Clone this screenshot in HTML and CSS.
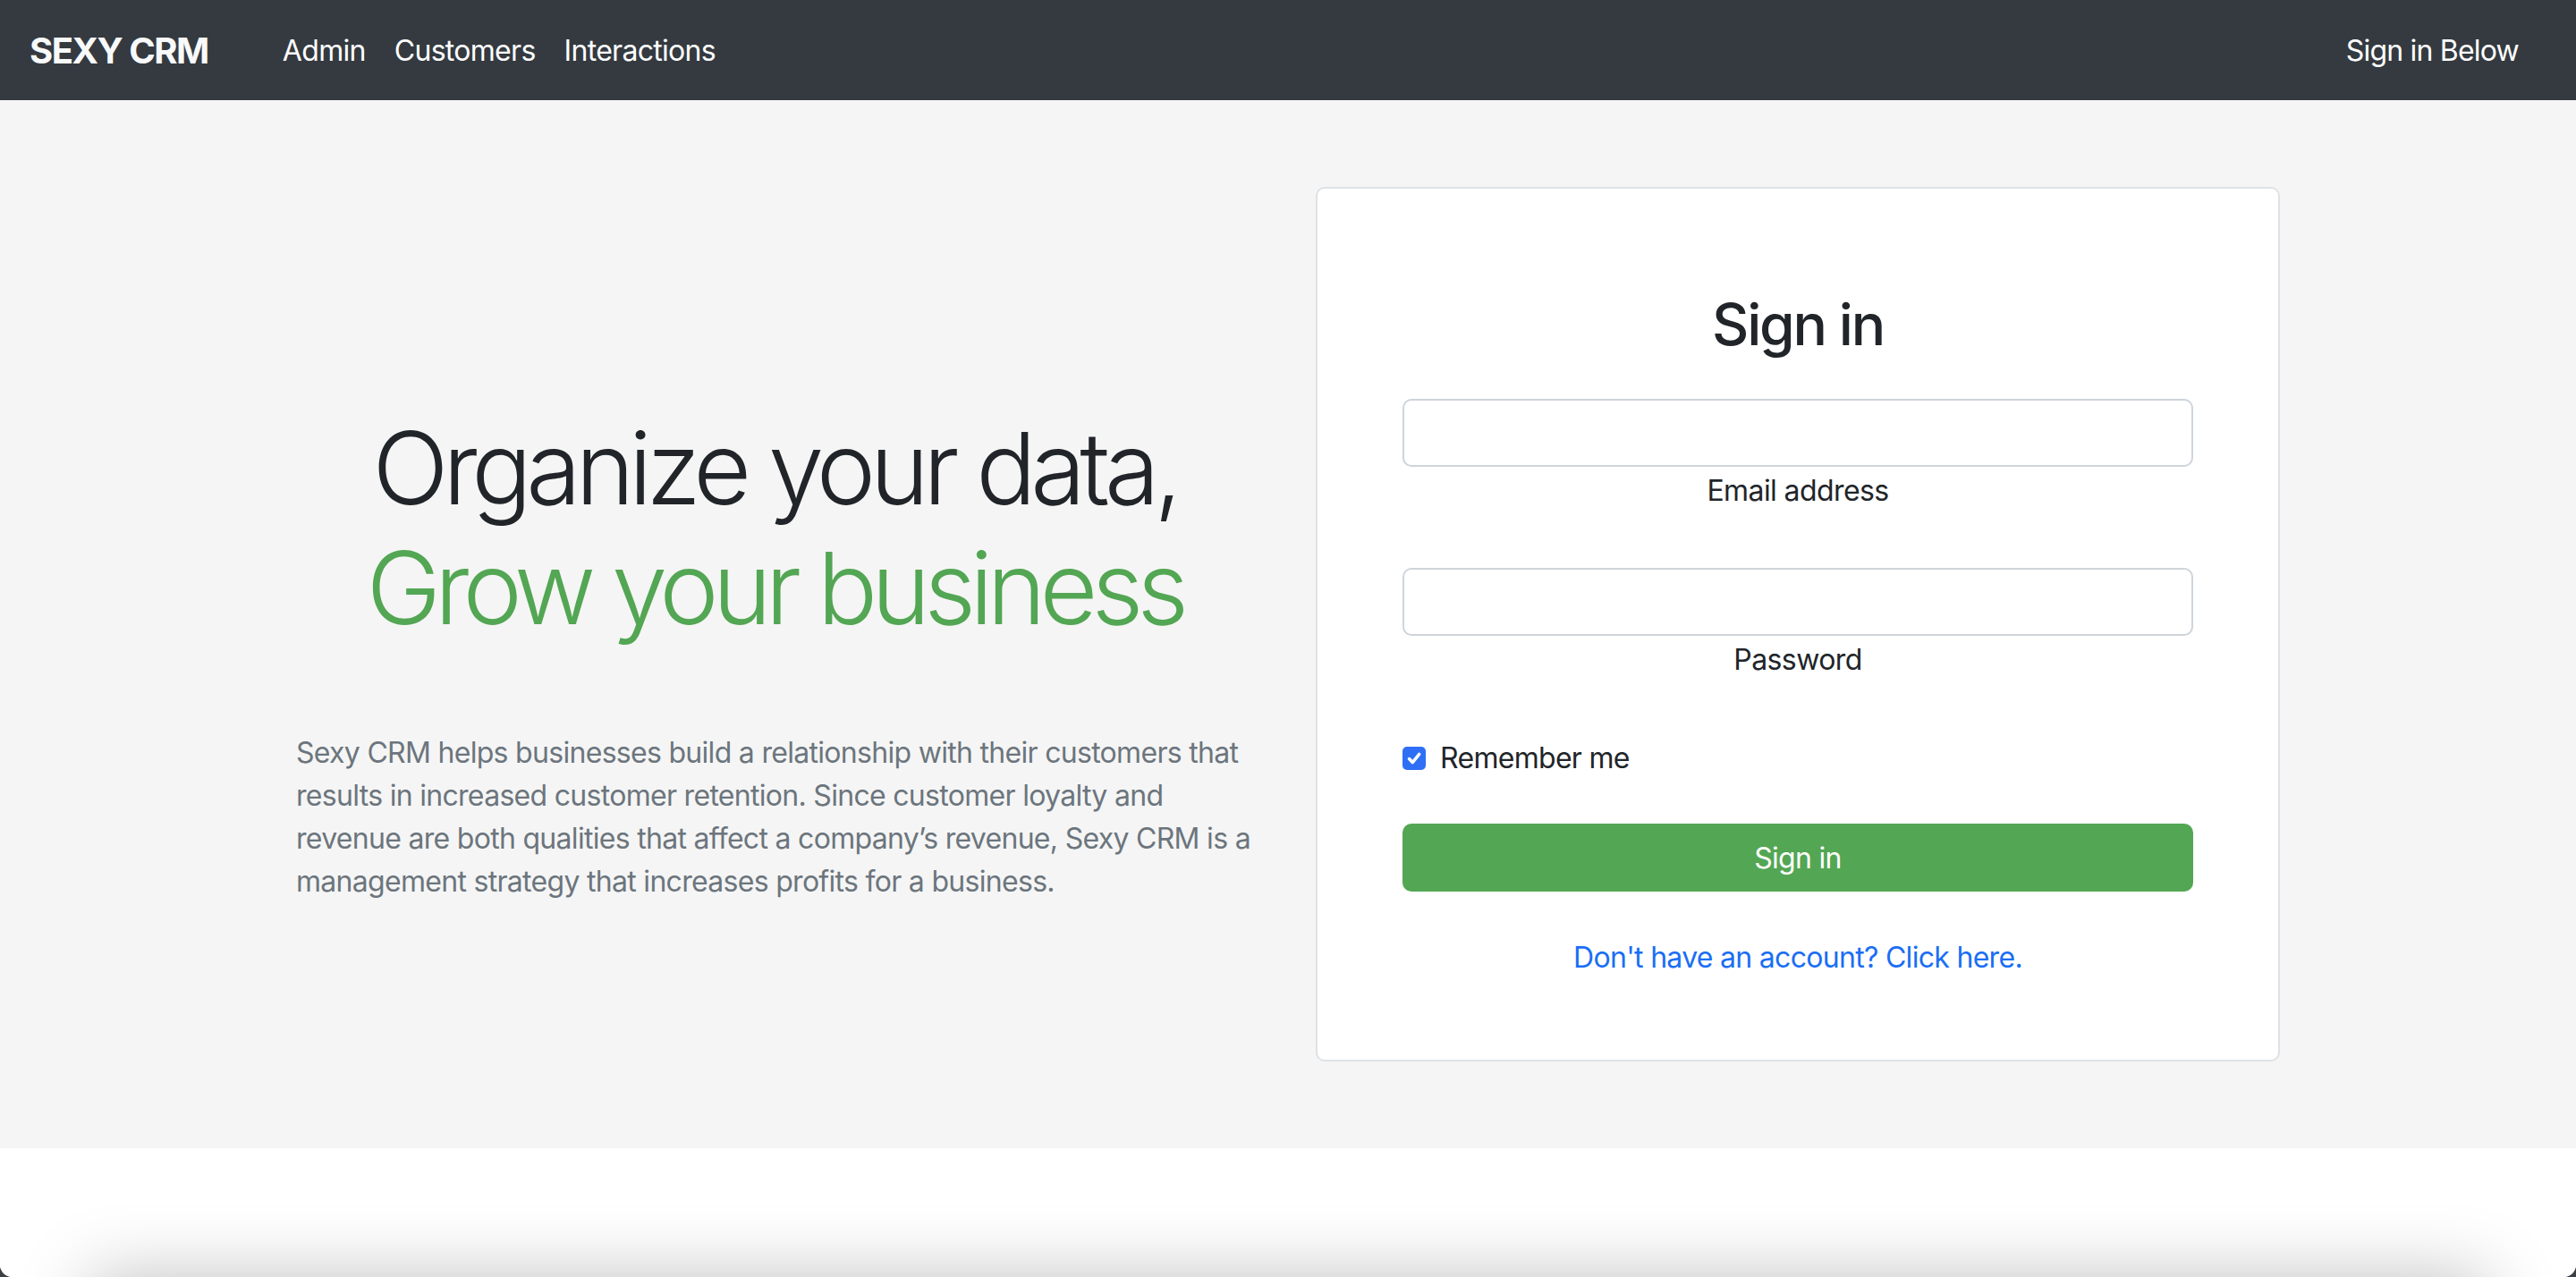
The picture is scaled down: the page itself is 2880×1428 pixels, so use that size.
FILE: index.html
```html
<!DOCTYPE html>
<html lang="en">
<head>
<meta charset="utf-8">
<title>Sexy CRM</title>
<link rel="stylesheet" href="styles.css">
</head>
<body>
<div class="window">
  <nav class="navbar">
    <a class="brand" href="#">SEXY CRM</a>
    <ul class="nav-links">
      <li><a href="#">Admin</a></li>
      <li><a href="#">Customers</a></li>
      <li><a href="#">Interactions</a></li>
    </ul>
    <span class="nav-right">Sign in Below</span>
  </nav>

  <section class="hero">
    <div class="hero-text">
      <h1 class="display">Organize your data,<br><span class="green">Grow your business</span></h1>
      <p class="lead">Sexy CRM helps businesses build a relationship with their customers that results in increased customer retention. Since customer loyalty and revenue are both qualities that affect a company’s revenue, Sexy CRM is a management strategy that increases profits for a business.</p>
    </div>

    <form class="card">
      <h2 class="card-title">Sign in</h2>
      <div class="field">
        <input class="control" type="email">
        <label class="field-label">Email address</label>
      </div>
      <div class="field">
        <input class="control" type="password">
        <label class="field-label">Password</label>
      </div>
      <label class="check">
        <span class="box"><svg viewBox="0 0 20 20" width="22" height="22"><path d="M5 10.5l3.4 3.6L15.2 5.8" fill="none" stroke="#fff" stroke-width="3.2" stroke-linecap="round" stroke-linejoin="round"/></svg></span>
        <span>Remember me</span>
      </label>
      <button class="btn" type="button">Sign in</button>
      <a class="signup" href="#">Don't have an account? Click here.</a>
    </form>
  </section>

  <div class="below"></div>
  <div class="footer-card"></div>
</div>
</body>
</html>
```

FILE: styles.css
```css
* { box-sizing: border-box; }
html, body {
  margin: 0;
  padding: 0;
  background: #3a4046;
}
body {
  font-family: Inter, "Liberation Sans", sans-serif;
  color: #212529;
}
.window {
  height: 1428px;
  overflow: hidden;
  background: #fff;
  border-radius: 0 0 14px 14px;
}
.navbar {
  height: 112px;
  background: #343a40;
  display: flex;
  align-items: center;
  padding: 0 64px 0 33px;
}
.brand {
  color: #f8f9fa;
  font-weight: 700;
  font-size: 40px;
  text-decoration: none;
  letter-spacing: -1.5px;
  margin-right: 67px;
}
.nav-links {
  display: flex;
  list-style: none;
  margin: 0;
  padding: 0;
  flex: 1;
}
.nav-links a {
  display: block;
  padding: 0 16px;
  color: #fff;
  font-size: 32px;
  text-decoration: none;
  letter-spacing: -0.7px;
}
.nav-right {
  color: #fff;
  font-size: 32px;
  letter-spacing: -0.8px;
}
.hero {
  height: 1172px;
  background: #f5f5f5;
  display: flex;
  justify-content: center;
  align-items: flex-start;
  padding-top: 97px;
  gap: 70px;
}
.hero-text {
  width: 1070px;
  padding-top: 247px;
}
.display {
  margin: 0 0 94px;
  font-size: 112px;
  line-height: 134px;
  font-weight: 300;
  text-align: center;
  letter-spacing: -6.4px;
  color: #212529;
}
.green {
  color: #53a653;
  letter-spacing: -6.9px;
}
.lead {
  margin: 0;
  font-size: 32px;
  line-height: 48px;
  color: #6c757d;
  letter-spacing: -0.7px;
}
.card {
  width: 1078px;
  height: 978px;
  background: #fff;
  border: 2px solid #dee2e6;
  border-radius: 10px;
  padding: 113px 95px 0;
  display: flex;
  flex-direction: column;
  align-items: stretch;
}
.card-title {
  margin: 0 0 45px;
  font-size: 64px;
  line-height: 77px;
  font-weight: 500;
  text-align: center;
  letter-spacing: -2.2px;
}
.field {
  display: flex;
  flex-direction: column;
  margin-bottom: 62px;
}
.control {
  height: 76px;
  border: 2px solid #ced4da;
  border-radius: 10px;
  background: #fff;
  font-size: 32px;
  padding: 0 24px;
}
.field-label {
  text-align: center;
  font-size: 32px;
  line-height: 48px;
  padding-top: 3px;
  letter-spacing: -0.6px;
}
.check {
  display: flex;
  align-items: center;
  gap: 16px;
  font-size: 32px;
  line-height: 48px;
  letter-spacing: -0.7px;
  margin-bottom: 49px;
}
.box {
  width: 26px;
  height: 26px;
  border-radius: 5px;
  background: #2f6ff6;
  display: flex;
  align-items: center;
  justify-content: center;
}
.btn {
  height: 76px;
  border: 0;
  border-radius: 10px;
  background: #53a653;
  color: #fff;
  font-family: inherit;
  font-size: 32px;
  letter-spacing: -0.7px;
  margin-bottom: 50px;
}
.signup {
  text-align: center;
  color: #1a6ef5;
  font-size: 32px;
  line-height: 48px;
  text-decoration: none;
  letter-spacing: -0.7px;
}
.below {
  height: 144px;
  background: #fff;
}
.footer-card {
  height: 200px;
  margin: 0 100px;
  background: #fff;
  box-shadow: 0 0 80px rgba(0, 0, 0, 0.25);
}
```
